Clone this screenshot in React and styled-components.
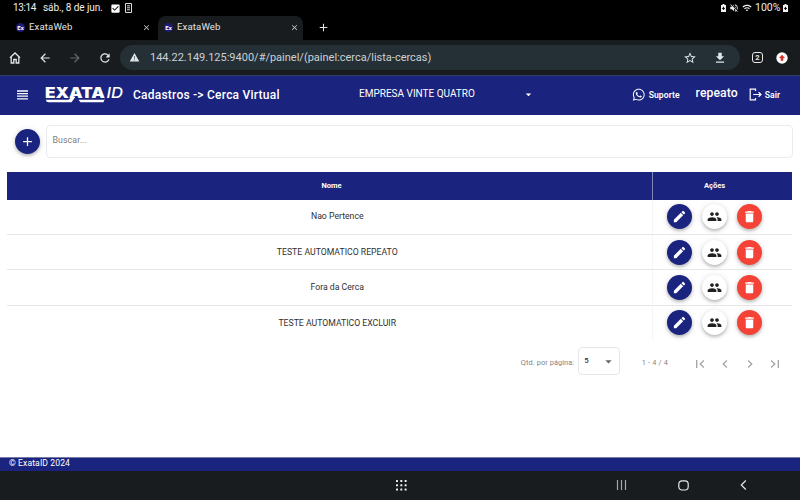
import React from "react";
import styled, { createGlobalStyle } from "styled-components";
import {
  MdArrowBack, MdArrowForward, MdRefresh, MdWarning, MdStarBorder,
  MdDownload, MdClose, MdAdd, MdCheckBox, MdVolumeOff, MdWifi,
  MdArrowDropDown, MdEdit, MdPeople, MdDelete, MdFirstPage, MdChevronLeft,
  MdChevronRight, MdLastPage,
} from "react-icons/md";
import { FaWhatsapp } from "react-icons/fa";

const GlobalStyle = createGlobalStyle`
  * { box-sizing: border-box; }
  body { margin: 0; font-family: Roboto, "Liberation Sans", sans-serif; background: #fff; }
  svg { display: block; flex: none; }
`;

const Screen = styled.div`
  width: 800px;
  height: 500px;
  display: flex;
  flex-direction: column;
  overflow: hidden;
  background: #fff;
`;

const Label = styled.span`
  display: block;
  flex: none;
  white-space: pre;
  line-height: 1.2;
  font-size: ${(p) => p.$size}px;
  font-weight: ${(p) => p.$weight || 400};
  letter-spacing: ${(p) => p.$track || 0}px;
  color: ${(p) => p.$color || "inherit"};
  width: ${(p) => (p.$w ? `${p.$w}px` : "auto")};
`;

const StatusBar = styled.div`
  height: 16px;
  flex: none;
  display: flex;
  align-items: center;
  padding: 0 12px 0 13px;
  background: #000;
  color: #eee;
`;
const StatusIcons = styled.div`
  display: flex;
  align-items: center;
  gap: ${(p) => p.$gap}px;
  margin-left: ${(p) => (p.$end ? "auto" : "7px")};
`;

const TabStrip = styled.div`
  height: 24px;
  flex: none;
  display: flex;
  padding-left: 10px;
  background: #000;
  color: #e2e4e7;
`;
const Tab = styled.div`
  width: ${(p) => (p.$active ? 145 : 148)}px;
  height: 24px;
  display: flex;
  align-items: center;
  padding: 0 4px 2px 6px;
  border-radius: 8px 8px 0 0;
  background: ${(p) => (p.$active ? "#191c1f" : "#000")};
  svg { margin-left: auto; margin-right: ${(p) => (p.$active ? 0 : 3)}px; color: #c8cacc; }
`;
const Favicon = styled.span`
  width: 9px;
  height: 9px;
  margin-right: 4px;
  border-radius: 50%;
  background: #1c1c79;
  color: #fff;
  font-size: 6px;
  line-height: 9px;
  font-weight: 700;
  text-align: center;
`;
const NewTab = styled.div`
  display: flex;
  align-items: center;
  padding: 0 0 2px 14px;
`;

const BrowserBar = styled.div`
  height: 35px;
  flex: none;
  display: flex;
  align-items: center;
  padding: 0 11px 0 8px;
  background: #191c1f;
  color: #e3e6e8;
`;
const BrowserButton = styled.div`
  width: ${(p) => p.$w || 30}px;
  display: flex;
  color: ${(p) => (p.$off ? "#64686b" : "inherit")};
`;
const Address = styled.div`
  width: 620px;
  height: 25px;
  display: flex;
  align-items: center;
  padding: 0 13px 0 9px;
  border-radius: 13px;
  background: #243036;
  color: #cbd1d4;
`;
const AddressText = styled.div`
  margin-left: 10px;
`;
const AddressActions = styled.div`
  display: flex;
  gap: 16px;
  margin-left: auto;
  color: #dfe5e8;
`;
const TabCount = styled.div`
  width: 11px;
  height: 11px;
  margin: 0 13px 0 12px;
  border: 1.3px solid #e8eaeb;
  border-radius: 3px;
  font-size: 7.5px;
  line-height: 9px;
  font-weight: 700;
  text-align: center;
`;

const Header = styled.header`
  height: 40px;
  flex: none;
  display: flex;
  align-items: center;
  border-top: 1px solid #343b68;
  padding: 0 20px 1px 17px;
  background: #1a237e;
  color: #fff;
`;
const LogoBox = styled.div`
  width: 80px;
  margin: 0 9px 0 16px;
`;
const Title = styled.div`
  width: 147px;
`;
const Company = styled.div`
  width: 176px;
  display: flex;
  align-items: center;
  justify-content: space-between;
  padding-bottom: 2px;
  margin-left: 79px;
`;
const HeaderLinks = styled.nav`
  display: flex;
  align-items: center;
  margin-left: auto;
`;
const HeaderLink = styled.div`
  display: flex;
  align-items: center;
  gap: ${(p) => p.$gap || 3}px;
`;
const UserName = styled.div`
  padding-bottom: 3px;
  margin: 0 11px 0 16px;
`;

const Main = styled.main`
  flex: 1;
  padding: 10px 8px 0 7px;
`;
const SearchRow = styled.div`
  display: flex;
  align-items: center;
  gap: 6px;
  padding-left: 7.5px;
  margin-right: -1px;
  margin-bottom: 14px;
`;
const RoundButton = styled.div`
  width: 25px;
  height: 25px;
  flex: none;
  display: flex;
  align-items: center;
  justify-content: center;
  border-radius: 50%;
  background: ${(p) => p.$bg};
  color: ${(p) => p.$fg || "#fff"};
  box-shadow: 0 2px 3px rgba(0, 0, 0, 0.2), 0 1px 6px rgba(0, 0, 0, 0.14);
`;
const SearchField = styled.div`
  flex: 1;
  height: 33px;
  display: flex;
  align-items: center;
  padding: 0 6px 2px;
  border: 1px solid #ebebee;
  border-radius: 4px;
`;

const Table = styled.div`
  display: grid;
  grid-template-columns: 645px 1fr;
`;
const HeadCell = styled.div`
  height: 27.5px;
  display: flex;
  align-items: center;
  justify-content: center;
  padding: 0 ${(p) => (p.$last ? 17 : 0)}px 1px ${(p) => (p.$last ? 1 : 4)}px;
  border-left: ${(p) => (p.$last ? "1px solid #8086b6" : "0")};
  background: #1a237e;
  color: #fff;
`;
const Cell = styled.div`
  height: 35.4px;
  display: flex;
  align-items: center;
  justify-content: center;
  gap: 10px;
  padding: 0 ${(p) => (p.$actions ? 15.5 : 0)}px 0 ${(p) => (p.$actions ? 0 : 15.5)}px;
  border-bottom: 1px solid ${(p) => (p.$last ? "transparent" : "#e6e6e6")};
  border-left: ${(p) => (p.$actions ? "1px solid #f5f5f5" : "0")};
`;
const Paginator = styled.div`
  height: 41px;
  display: flex;
  align-items: center;
  justify-content: flex-end;
  padding: 4px 9px 0 0;
  color: #858585;
`;
const PageSize = styled.div`
  width: 42px;
  height: 28px;
  display: flex;
  align-items: center;
  justify-content: space-between;
  padding: 0 3px 0 5px;
  margin: -5px 21.5px 0 4px;
  border: 1px solid #e6e6e6;
  border-radius: 4px;
  color: #333;
`;
const PageButtons = styled.div`
  display: flex;
  gap: 9px;
  margin: 1px 0 0 24px;
  color: #a5a5a5;
`;

const Footer = styled.footer`
  height: 14px;
  flex: none;
  display: flex;
  align-items: center;
  padding: 0 0 2px 9px;
  border-top: 1px solid #757aa5;
  background: #1a237e;
  color: #fff;
`;
const SystemNav = styled.div`
  height: 29px;
  flex: none;
  display: flex;
  align-items: center;
  justify-content: flex-end;
  gap: 51px;
  padding: 0 53px 1px 0;
  background: #191c1f;
  color: #e2e2e2;
`;
const AppsButton = styled.div`
  margin-right: 158px;
`;

const MenuIcon = () => (
  <svg width="11" height="10" viewBox="0 0 11 10" fill="none" stroke="#fff" strokeWidth="1.3">
    <path d="M0 1H11M0 3.6H11M0 6.2H11M0 8.8H11" />
  </svg>
);

const Logo = () => (
  <svg width="80" height="20" viewBox="0 0 80 20" fill="#fff">
    <text x="1" y="13.2" fontFamily="Inter, sans-serif" fontSize="14.5" fontWeight="900" textLength="60" lengthAdjust="spacingAndGlyphs">EXATA</text>
    <text x="62.5" y="12.8" fontFamily="Inter, sans-serif" fontSize="14.8" fontWeight="500" fontStyle="italic" textLength="16.5" lengthAdjust="spacingAndGlyphs">ID</text>
    <path d="M1.8 14.8H24.5L28 11.8H31.5L27.5 17.3H4.5Q2.3 17.3 1.8 14.8ZM34.5 14.8H60L61 13L59.5 17.3H36.5Z" />
  </svg>
);

const HomeIcon = () => (
  <svg width="14" height="14" viewBox="0 0 14 14" fill="none" stroke="currentColor" strokeWidth="1.3">
    <path d="M2 6.8L7 2L12 6.8M3.2 6V12H5.8V8.5H8.2V12H10.8V6" />
  </svg>
);

const ExitIcon = () => (
  <svg width="13" height="13" viewBox="0 0 13 13" fill="none" stroke="#fff" strokeWidth="1.2">
    <path d="M6.5 3V1.2H1.2V11.8H6.5V10M4.2 6.5H12M9.6 4.2L12 6.5L9.6 8.8" />
  </svg>
);

const NoteIcon = () => (
  <svg width="7" height="10" viewBox="0 0 7 10" fill="none" stroke="#ddd" strokeWidth="1">
    <path d="M.5.5H6.5V9.5H.5ZM2 2.8H5M2 4.8H5M2 6.8H5" />
  </svg>
);

const BatteryIcon = () => (
  <svg width="5" height="8" viewBox="0 0 5 8">
    <path d="M1.5 0H3.5V1H5V8H0V1H1.5Z" fill="#f2f2f2" />
    <path d="M2.5 2.8V6M1 4.4H4" stroke="#000" strokeWidth=".9" />
  </svg>
);

const UpdateBadge = () => (
  <svg width="12" height="12" viewBox="0 0 12 12">
    <circle cx="6" cy="6" r="5.7" fill="#fff" />
    <path d="M6 2.8L9 6H7.3V8.8H4.7V6H3Z" fill="#d5302c" />
  </svg>
);

const AppsIcon = () => (
  <svg width="11" height="11" viewBox="0 0 11 11" fill="#f2f2f2">
    {[0, 4.3, 8.6].map((y) =>
      [0, 4.3, 8.6].map((x) => <rect key={`${x}-${y}`} x={x} y={y} width="2" height="2" rx=".5" />)
    )}
  </svg>
);

const RecentsIcon = () => (
  <svg width="11" height="10" viewBox="0 0 11 10" stroke="#a6a8aa" strokeWidth="1.2">
    <path d="M1.5 0V10M5.5 0V10M9.5 0V10" />
  </svg>
);

const HomeKeyIcon = () => (
  <svg width="11" height="11" viewBox="0 0 11 11" fill="none" stroke="#e6e6e6" strokeWidth="1.2">
    <rect x=".8" y=".8" width="9.4" height="9.2" rx="3.2" />
  </svg>
);

const BackKeyIcon = () => (
  <svg width="7" height="10" viewBox="0 0 7 10" fill="none" stroke="#e6e6e6" strokeWidth="1.2">
    <path d="M5.8 .5L1.3 5L5.8 9.5" />
  </svg>
);

const fences = ["Nao Pertence", "TESTE AUTOMATICO REPEATO", "Fora da Cerca", "TESTE AUTOMATICO EXCLUIR"];

export default function App() {
  return (
    <Screen>
      <GlobalStyle />
      <StatusBar>
        <Label $size={10} $w={30} $track={-0.4}>13:14</Label>
        <Label $size={10} $w={60} $track={-0.08}>sáb., 8 de jun.</Label>
        <StatusIcons $gap={4}>
          <MdCheckBox size={11} color="#fff" />
          <NoteIcon />
        </StatusIcons>
        <StatusIcons $end $gap={3}>
          <BatteryIcon />
          <MdVolumeOff size={10} />
          <MdWifi size={10} />
          <Label $size={10.5} $w={25}>100%</Label>
          <BatteryIcon />
        </StatusIcons>
      </StatusBar>

      <TabStrip>
        {[false, true].map((active) => (
          <Tab key={String(active)} $active={active}>
            <Favicon>Ex</Favicon>
            <Label $size={9.6} $track={0.12}>ExataWeb</Label>
            <MdClose size={9} />
          </Tab>
        ))}
        <NewTab><MdAdd size={13} /></NewTab>
      </TabStrip>

      <BrowserBar>
        <BrowserButton><HomeIcon /></BrowserButton>
        <BrowserButton><MdArrowBack size={14} /></BrowserButton>
        <BrowserButton $off><MdArrowForward size={14} /></BrowserButton>
        <BrowserButton $w={22}><MdRefresh size={14} /></BrowserButton>
        <Address>
          <svg width="11" height="11" viewBox="0 0 11 11" fill="#dfe5e8">
            <path d="M5.5 1L10.3 9.5H.7Z" />
            <path d="M5.5 4.2V6.6M5.5 7.4V8.3" stroke="#243036" strokeWidth=".7" />
          </svg>
          <AddressText>
            <Label $size={11}>144.22.149.125:9400/#/painel/(painel:cerca/lista-cercas)</Label>
          </AddressText>
          <AddressActions>
            <MdStarBorder size={14} />
            <MdDownload size={14} />
          </AddressActions>
        </Address>
        <TabCount>2</TabCount>
        <UpdateBadge />
      </BrowserBar>

      <Header>
        <MenuIcon />
        <LogoBox><Logo /></LogoBox>
        <Title><Label $size={12} $weight={500} $track={0.23}>{"Cadastros -> Cerca Virtual"}</Label></Title>
        <Company>
          <Label $size={10}>EMPRESA VINTE QUATRO</Label>
          <MdArrowDropDown size={13} />
        </Company>
        <HeaderLinks>
          <HeaderLink>
            <FaWhatsapp size={13.5} />
            <Label $size={8.6} $weight={600} $track={0.04}>Suporte</Label>
          </HeaderLink>
          <UserName><Label $size={12.2} $weight={500} $track={0.1}>repeato</Label></UserName>
          <HeaderLink>
            <ExitIcon />
            <Label $size={8.6} $weight={600}>Sair</Label>
          </HeaderLink>
        </HeaderLinks>
      </Header>

      <Main>
        <SearchRow>
          <RoundButton $bg="#1a237e"><MdAdd size={15} /></RoundButton>
          <SearchField><Label $size={8.8} $track={0.08} $color="#808080">Buscar...</Label></SearchField>
        </SearchRow>
        <Table>
          <HeadCell><Label $size={7.5} $weight={700}>Nome</Label></HeadCell>
          <HeadCell $last><Label $size={7.5} $weight={700}>Ações</Label></HeadCell>
          {fences.map((name, i) => (
            <React.Fragment key={name}>
              <Cell $last={i === fences.length - 1}>
                <Label $size={8.7} $color="#303030">{name}</Label>
              </Cell>
              <Cell $actions $last={i === fences.length - 1}>
                <RoundButton $bg="#1a237e"><MdEdit size={15} /></RoundButton>
                <RoundButton $bg="#fff" $fg="#202020"><MdPeople size={15} /></RoundButton>
                <RoundButton $bg="#f44336"><MdDelete size={15} /></RoundButton>
              </Cell>
            </React.Fragment>
          ))}
        </Table>
        <Paginator>
          <Label $size={7.4} $track={0.08}>Qtd. por página:</Label>
          <PageSize>
            <Label $size={7.8} $weight={500}>5</Label>
            <MdArrowDropDown size={15} color="#666" />
          </PageSize>
          <Label $size={7.4} $track={0.15}>1 - 4 / 4</Label>
          <PageButtons>
            <MdFirstPage size={16} />
            <MdChevronLeft size={16} />
            <MdChevronRight size={16} />
            <MdLastPage size={16} />
          </PageButtons>
        </Paginator>
      </Main>

      <Footer><Label $size={8.6} $track={0.1}>© ExataID 2024</Label></Footer>
      <SystemNav>
        <AppsButton><AppsIcon /></AppsButton>
        <RecentsIcon />
        <HomeKeyIcon />
        <BackKeyIcon />
      </SystemNav>
    </Screen>
  );
}
